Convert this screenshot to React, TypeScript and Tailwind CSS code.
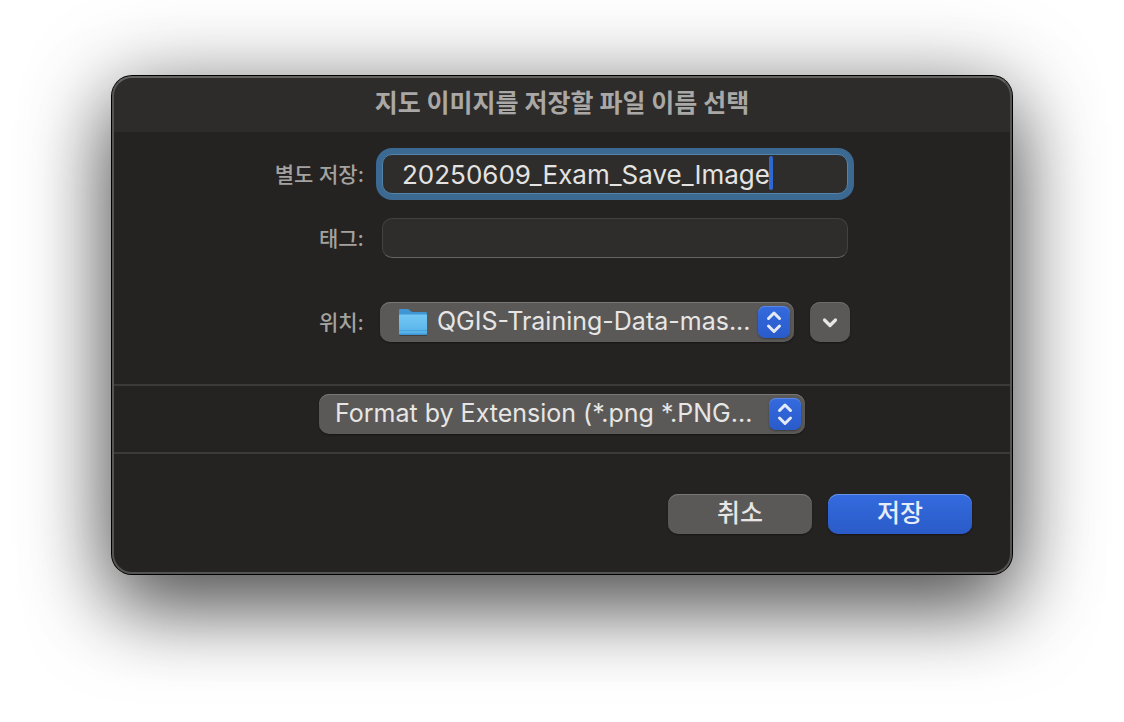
import { useState, type ReactNode } from "react";

const LOCATIONS = ["QGIS-Training-Data-mas..."];
const FORMATS = ["Format by Extension (*.png *.PNG..."];

function FolderIcon() {
  return (
    <svg viewBox="0 0 30 30" className="h-[30px] w-[30px]" aria-hidden="true">
      <defs>
        <linearGradient id="folder-front" x1="0" y1="0" x2="0" y2="1">
          <stop offset="0" stopColor="#74c8f4" />
          <stop offset="1" stopColor="#54b0e8" />
        </linearGradient>
      </defs>
      <rect x="1" y="26" width="28" height="3" rx="1" fill="#000" opacity=".25" />
      <path
        d="M1 3.200C1 2.500 1.500 2 2.200 2h7.300c.8 0 1.300.3 1.800.8l1.200 1.300c.5.5 1 .8 1.800.8h13.200c.9 0 1.500.6 1.500 1.400V15H1z"
        fill="#3f96d2"
      />
      <path
        d="M1 8.500C1 7.900 1.400 7.500 2 7.500h26c.6 0 1 .4 1 1V26.500c0 .8-.6 1.500-1.500 1.500h-25C1.600 28 1 27.300 1 26.500z"
        fill="url(#folder-front)"
      />
      <path d="M1 23.500h28" stroke="#4aa2dc" strokeWidth="1" />
      <path d="M1 26.500h28c0 1-.6 1.500-1.500 1.500h-25C1.600 28 1 27.500 1 26.500z" fill="#3f96d2" />
    </svg>
  );
}

function StepperBadge() {
  return (
    <span className="pointer-events-none absolute right-1 top-1 flex h-8 w-8 items-center justify-center rounded-[7px] bg-linear-to-b from-[#346bdf] to-[#2a5bca] shadow-[inset_0_1px_0_#5b88e6,0_1px_2px_rgba(0,0,0,0.35)]">
      <svg
        viewBox="0 0 32 32"
        className="h-8 w-8"
        fill="none"
        stroke="#e4ebf8"
        strokeWidth="3"
        strokeLinecap="round"
        strokeLinejoin="round"
        aria-hidden="true"
      >
        <path d="M10.500 12.500 16 7l5.500 5.500M10.500 20 16 25.500 21.500 20" />
      </svg>
    </span>
  );
}

type PopUpProps = { id: string; label?: string; options: string[]; icon?: ReactNode };

function PopUp({ id, label, options, icon }: PopUpProps) {
  return (
    <div className="relative w-full">
      {icon && <span className="pointer-events-none absolute left-[18px] top-[5px]">{icon}</span>}
      <select
        id={id}
        aria-label={label}
        className={`block h-10 w-full appearance-none rounded-[10px] bg-[#5a5957] pb-0.5 pr-10 text-[25px] leading-[38px] text-[#e7e6e5] shadow-[inset_0_1px_0_#787775,0_1px_2px_rgba(0,0,0,0.4)] outline-none ${
          icon ? "pl-[57px]" : "pl-4"
        }`}
      >
        {options.map((o) => (
          <option key={o}>{o}</option>
        ))}
      </select>
      <StepperBadge />
    </div>
  );
}

function Label({ htmlFor, children }: { htmlFor: string; children: ReactNode }) {
  return (
    <label
      htmlFor={htmlFor}
      className="h-10 whitespace-nowrap text-right text-[21px] font-medium leading-[42px] text-[#a3a2a0]"
    >
      {children}
    </label>
  );
}

export default function App() {
  const [name, setName] = useState("20250609_Exam_Save_Image");
  const [tags, setTags] = useState("");
  const [edited, setEdited] = useState(false);

  return (
    <main className="min-h-screen overflow-hidden bg-white px-28 py-[76px] font-[Inter,'Noto_Sans_CJK_KR',sans-serif]">
      <form
        role="dialog"
        aria-labelledby="dialog-title"
        onSubmit={(e) => e.preventDefault()}
        className="relative rounded-[20px] bg-[#242321] shadow-[0_0_0_1px_#000,0_36px_80px_rgba(0,0,0,0.55),0_8px_90px_rgba(0,0,0,0.35)]"
      >
        <header className="flex h-14 items-center justify-center rounded-t-[20px] bg-[#2d2c2a]">
          <h1 id="dialog-title" className="text-[25px] font-bold text-[#a9a8a6]">
            지도 이미지를 저장할 파일 이름 선택
          </h1>
        </header>

        <div className="mx-auto grid max-w-full grid-cols-[90px_1fr] gap-x-[18px] gap-y-6 pb-[42px] pt-[22px] sm:w-[576px]">
          <Label htmlFor="file-name">별도 저장:</Label>
          <div className="relative mr-0.5 h-10">
            <input
              id="file-name"
              value={name}
              onChange={(e) => {
                setName(e.target.value);
                setEdited(true);
              }}
              className={`block h-10 w-full rounded-[10px] border border-[#5283ab] bg-[#2e2d2b] pl-[19px] pr-4 text-[26px] text-[#e4e3e1] shadow-[0_0_0_6px_#3c6992] outline-none ${
                edited ? "caret-[#3068d8]" : "caret-transparent"
              }`}
            />
            {!edited && <span className="absolute left-[387px] top-0.5 h-[34px] w-1 rounded-sm bg-[#3068d2]" />}
          </div>

          <Label htmlFor="tags">태그:</Label>
          <input
            id="tags"
            value={tags}
            onChange={(e) => setTags(e.target.value)}
            className="mr-0.5 h-10 rounded-[10px] border border-[#434240] border-b-[#656462] bg-[#2e2d2b] px-4 text-[26px] text-[#e4e3e1] outline-none"
          />

          <div className="col-span-2 mt-5 grid h-10 grid-cols-[90px_1fr] gap-x-4">
            <Label htmlFor="location">위치:</Label>
            <div className="flex gap-4">
              <PopUp id="location" options={LOCATIONS} icon={<FolderIcon />} />
              <button
                type="button"
                aria-label="펼치기"
                className="flex h-10 w-10 shrink-0 items-center justify-center rounded-[10px] bg-[#5a5957] shadow-[inset_0_1px_0_#6d6c6a,0_1px_2px_rgba(0,0,0,0.4)]"
              >
                <svg
                  viewBox="0 0 40 40"
                  className="h-10 w-10"
                  fill="none"
                  stroke="#e7e6e5"
                  strokeWidth="3.200"
                  strokeLinecap="round"
                  strokeLinejoin="round"
                  aria-hidden="true"
                >
                  <path d="M14.500 18 20 23.500 25.500 18" />
                </svg>
              </button>
            </div>
          </div>
        </div>

        <div className="flex justify-center border-y-2 border-[#3b3a38] pb-[18px] pt-2">
          <div className="w-[486px] max-w-full">
            <PopUp id="format" label="형식" options={FORMATS} />
          </div>
        </div>

        <footer className="flex justify-end gap-4 p-10">
          <button
            type="button"
            className="h-10 w-36 rounded-[10px] bg-[#5a5957] pb-0.5 text-[25px] font-medium leading-[38px] text-[#e7e6e5] shadow-[inset_0_1px_0_#787775,0_1px_2px_rgba(0,0,0,0.4)]"
          >
            취소
          </button>
          <button
            type="submit"
            className="h-10 w-36 rounded-[10px] bg-linear-to-b from-[#346bdf] to-[#2a5bc8] pb-0.5 text-[25px] font-medium leading-[38px] text-[#e6ecf9] shadow-[inset_0_1px_0_#6b94ea,0_1px_2px_rgba(0,0,0,0.4)]"
          >
            저장
          </button>
        </footer>
        <span className="pointer-events-none absolute inset-0 rounded-[20px] border-2 border-[#555452] border-t-[#64635f]" />
      </form>
    </main>
  );
}
